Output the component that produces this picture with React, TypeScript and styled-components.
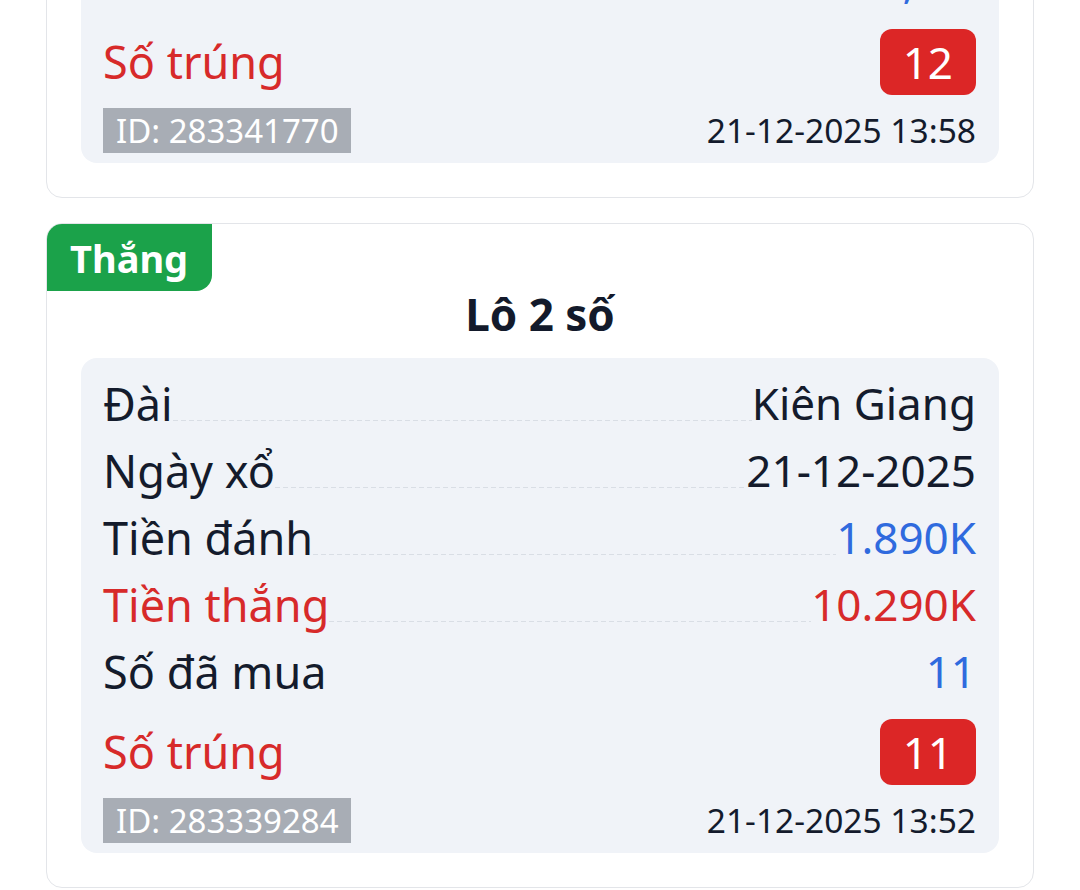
import React from "react";
import styled, { createGlobalStyle } from "styled-components";

const GlobalStyle = createGlobalStyle`
  html, body {
    margin: 0;
    padding: 0;
    background: #ffffff;
    font-family: "Noto Sans", "Open Sans", sans-serif;
    color: #111827;
    overflow: hidden;
  }
`;

const List = styled.div`
  display: flex;
  flex-direction: column;
  gap: 25px;
  padding: 0 46px;
  margin-top: -467px;
`;

const Card = styled.section`
  position: relative;
  background: #ffffff;
  border: 1px solid #e3e5e9;
  border-radius: 16px;
  padding: 57px 34px 34px 34px;
`;

const StatusTag = styled.div<{ $tone: "win" | "lose" }>`
  position: absolute;
  top: 0;
  left: 0;
  height: 67px;
  padding: 0 24px 0 23px;
  display: flex;
  align-items: center;
  background: ${(p) => (p.$tone === "win" ? "#1ba24a" : "#9ca3af")};
  color: #ffffff;
  font-weight: 700;
  font-size: 38px;
  border-radius: 15px 0 16px 0;
`;

const Title = styled.h2`
  margin: 0;
  text-align: center;
  font-size: 44px;
  line-height: 66px;
  font-weight: 700;
  color: #131a2b;
`;

const DetailBox = styled.div`
  margin-top: 11px;
  background: #f0f3f8;
  border-radius: 16px;
  padding: 12px 23px 10px 22px;
  display: flex;
  flex-direction: column;
`;

const InfoRow = styled.div`
  display: flex;
  align-items: flex-end;
  font-size: 44px;
  line-height: 67px;
`;

const Label = styled.span<{ $red?: boolean }>`
  font-size: 45px;
  color: ${(p) => (p.$red ? "#d72a2a" : "#141b2c")};
  white-space: nowrap;
`;

const Leader = styled.span<{ $hidden?: boolean }>`
  flex: 1;
  height: 1px;
  margin-bottom: 16px;
  background-image: ${(p) =>
    p.$hidden
      ? "none"
      : "repeating-linear-gradient(to right, #d9dee5 0 5px, transparent 5px 8px)"};
`;

const Value = styled.span<{ $tone?: "dark" | "blue" | "red" }>`
  white-space: nowrap;
  color: ${(p) =>
    p.$tone === "blue" ? "#2f6ade" : p.$tone === "red" ? "#d72a2a" : "#141b2c"};
`;

const HitRow = styled.div`
  margin-top: 14px;
  display: flex;
  align-items: center;
  justify-content: space-between;
`;

const HitLabel = styled.span`
  font-size: 45px;
  line-height: 66px;
  color: #d72a2a;
`;

const HitBadge = styled.span`
  background: #dc2626;
  color: #ffffff;
  font-size: 44px;
  line-height: 66px;
  padding: 0 23px;
  border-radius: 12px;
`;

const MetaRow = styled.div`
  margin-top: 13px;
  display: flex;
  align-items: center;
  justify-content: space-between;
`;

const IdTag = styled.span`
  background: #a8adb5;
  color: #ffffff;
  font-size: 33px;
  line-height: 45px;
  padding: 0 12px 0 13px;
`;

const Stamp = styled.span`
  font-size: 33.5px;
  line-height: 45px;
  color: #141b2c;
`;

type Ticket = {
  status: string;
  title: string;
  station: string;
  drawDate: string;
  stake: string;
  win: string;
  bought: string;
  hit: string;
  id: string;
  time: string;
};

const tickets: Ticket[] = [
  {
    status: "Thắng",
    title: "Lô 2 số",
    station: "Kiên Giang",
    drawDate: "21-12-2025",
    stake: "1.890K",
    win: "10.290K",
    bought: "56, 12",
    hit: "12",
    id: "283341770",
    time: "21-12-2025 13:58",
  },
  {
    status: "Thắng",
    title: "Lô 2 số",
    station: "Kiên Giang",
    drawDate: "21-12-2025",
    stake: "1.890K",
    win: "10.290K",
    bought: "11",
    hit: "11",
    id: "283339284",
    time: "21-12-2025 13:52",
  },
];

function TicketCard({ t }: { t: Ticket }) {
  return (
    <Card>
      <StatusTag $tone="win">{t.status}</StatusTag>
      <Title>{t.title}</Title>
      <DetailBox>
        <InfoRow>
          <Label>Đài</Label>
          <Leader />
          <Value>{t.station}</Value>
        </InfoRow>
        <InfoRow>
          <Label>Ngày xổ</Label>
          <Leader />
          <Value>{t.drawDate}</Value>
        </InfoRow>
        <InfoRow>
          <Label>Tiền đánh</Label>
          <Leader />
          <Value $tone="blue">{t.stake}</Value>
        </InfoRow>
        <InfoRow>
          <Label $red>Tiền thắng</Label>
          <Leader />
          <Value $tone="red">{t.win}</Value>
        </InfoRow>
        <InfoRow>
          <Label>Số đã mua</Label>
          <Leader $hidden />
          <Value $tone="blue">{t.bought}</Value>
        </InfoRow>
        <HitRow>
          <HitLabel>Số trúng</HitLabel>
          <HitBadge>{t.hit}</HitBadge>
        </HitRow>
        <MetaRow>
          <IdTag>ID: {t.id}</IdTag>
          <Stamp>{t.time}</Stamp>
        </MetaRow>
      </DetailBox>
    </Card>
  );
}

export default function App() {
  return (
    <>
      <GlobalStyle />
      <List>
        {tickets.map((t) => (
          <TicketCard key={t.id} t={t} />
        ))}
      </List>
    </>
  );
}
